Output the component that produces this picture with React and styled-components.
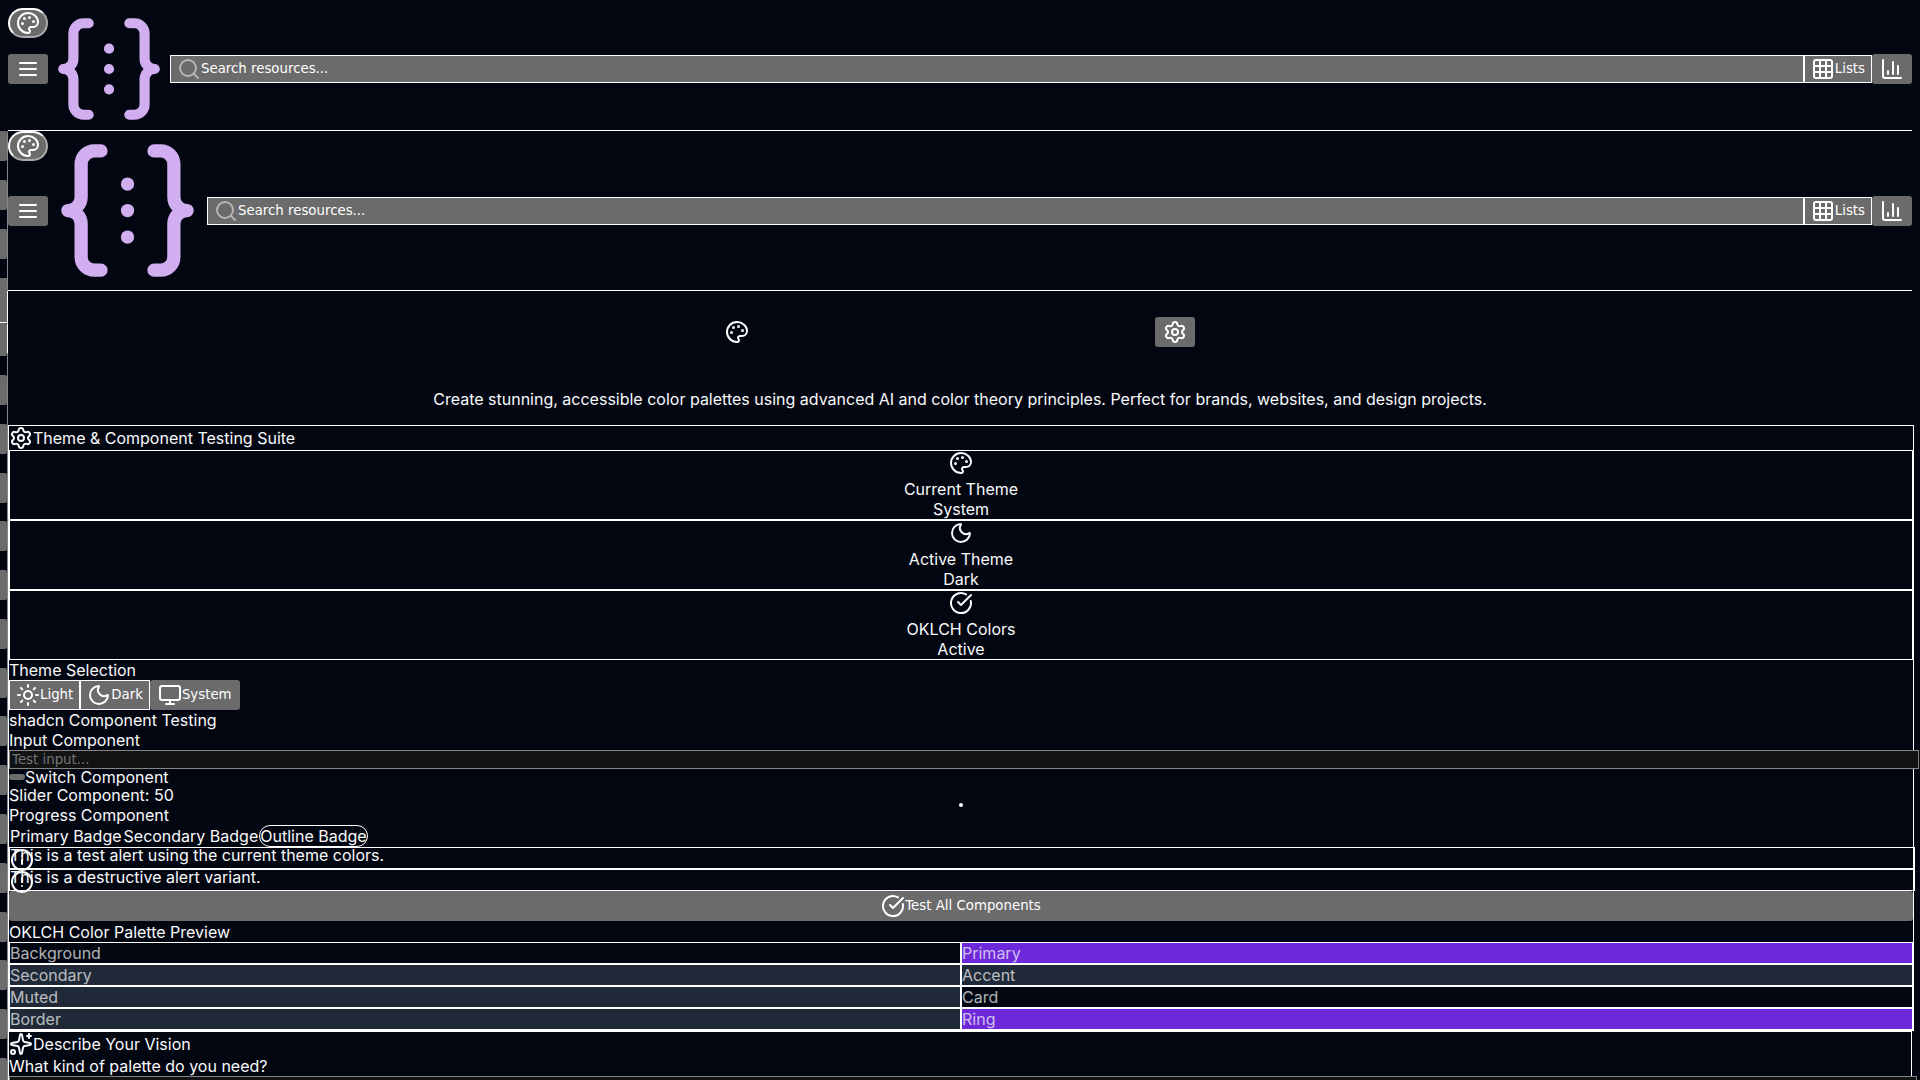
import React from "react";
import styled, { createGlobalStyle } from "styled-components";
import {
  Palette,
  Search,
  Grid3x3,
  ChartColumn,
  Settings,
  Moon,
  Sun,
  Monitor,
  CircleCheckBig,
  Info,
  CircleAlert,
  Sparkles,
} from "lucide-react";

const GlobalStyle = createGlobalStyle`
  html {
    color-scheme: dark;
    background: #020611;
  }
  body {
    margin: 0;
    color: #f9fafb;
    font-family: Inter, "Liberation Sans", sans-serif;
    font-size: 16px;
    line-height: 20px;
  }
  h2, h3, p {
    margin: 0;
    font-size: 16px;
    font-weight: 400;
  }
  svg {
    display: block;
    flex-shrink: 0;
  }
`;

const Page = styled.div`
  box-sizing: border-box;
  height: 100vh;
  padding: 8px;
  overflow: hidden;
`;

const Button = styled.button`
  display: inline-flex;
  align-items: center;
  justify-content: center;
  font-family: "DejaVu Sans", sans-serif;
  line-height: 16px;
  color: #ffffff;
`;

const OutlineButton = styled(Button)`
  border: 1px solid #ffffff;
  border-radius: 0;
  background: #6b6b6b;
`;

const SearchButton = styled(OutlineButton)`
  flex: 1;
  justify-content: flex-start;

  svg {
    opacity: 0.5;
  }
`;

const FloatingButton = styled(Button)`
  position: absolute;
  top: 0;
  left: 0;
  border: 2px outset #ffffff;
  border-radius: 9999px;
  background: #6b6b6b;
`;

const WideButton = styled(Button)`
  display: flex;
  width: 100%;
  margin-bottom: 1px;
`;

const Header = styled.header`
  position: relative;
  display: flex;
  align-items: center;
  border-bottom: 1px solid #ffffff;
`;

const Logo = styled.svg`
  width: ${(p) => p.$size}px;
  height: ${(p) => p.$size}px;
  color: #d0aef0;
`;

const Drawer = styled.aside`
  position: fixed;
  top: 131px;
  bottom: -8px;
  left: 0;
  display: flex;
  flex-direction: column;
  gap: 19px;
  box-sizing: border-box;
  width: 8px;
  border-right: 1px solid #85858c;

  &::after {
    content: "";
    position: absolute;
    top: 160px;
    left: 7px;
    width: 1px;
    height: 62px;
    background: #ffffff;
  }
`;

const DrawerGroup = styled.div`
  display: flex;
  flex-direction: column;
`;

const DrawerNav = styled.nav`
  display: flex;
  flex: 1;
  flex-direction: column;
  justify-content: space-between;
`;

const DrawerItem = styled.button`
  height: ${(p) => p.$height || 30}px;
  padding: 0;
  border: 0;
  border-bottom: ${(p) => (p.$divider ? "1px solid #ffffff" : "0")};
  border-radius: ${(p) => (p.$divider ? "0" : "0 2px 2px 0")};
  background: #6b6b6b;
`;

const HeroRow = styled.div`
  display: flex;
  align-items: center;
  justify-content: center;
  gap: 406px;
  padding: 26px 0;
`;

const HeroText = styled.p`
  margin: 16px 0;
  text-align: center;
`;

const Suite = styled.section`
  width: 100%;
  border: 1px solid #ffffff;
`;

const VisionCard = styled.section`
  border: 1px solid #ffffff;
`;

const CardHeader = styled.div`
  display: flex;
  align-items: center;
`;

const StatCard = styled.div`
  border: 1px solid #ffffff;
  text-align: center;

  svg {
    margin: 0 auto 4px;
  }
`;

const Row = styled.div`
  display: flex;
`;

const SwitchRow = styled.div`
  display: flex;
  align-items: center;
  height: 16px;
`;

const Switch = styled.button`
  width: 16px;
  height: 6px;
  padding: 0;
  border: 0;
  border-radius: 3px;
  background: #6b6b6b;
`;

const FieldLabel = styled.label`
  display: block;
`;

const TextField = styled.input`
  display: block;
  box-sizing: content-box;
  width: 100%;
  height: 15px;
  padding: 1px 2px;
  border: 1px solid #858585;
  background: #131313;
  font-family: "DejaVu Sans", sans-serif;

  &::placeholder {
    color: #757575;
  }
`;

const TextArea = styled.textarea`
  display: block;
  box-sizing: content-box;
  width: 100%;
  height: 60px;
  padding: 2px;
  border: 1px solid #858585;
  background: #131313;
  resize: none;
`;

const Slider = styled.input`
  display: block;
  width: 100%;
  height: 4px;
  margin: -2px 0;
  appearance: none;
  background: transparent;

  &::-webkit-slider-thumb {
    appearance: none;
    width: 4px;
    height: 4px;
    border-radius: 50%;
    background: #ffffff;
  }
`;

const Badge = styled.span`
  border: 1px solid ${(p) => (p.$outline ? "#ffffff" : "transparent")};
  border-radius: 9999px;
`;

const Alert = styled.div`
  position: relative;
  width: 100%;
  border: 1px solid #ffffff;

  svg {
    position: absolute;
    top: 0;
    left: 0;
  }

  p {
    transform: translateY(-3px);
  }
`;

const SwatchGrid = styled.div`
  display: grid;
  grid-template-columns: 1fr 1fr;
`;

const Swatch = styled.div`
  border: 1px solid #ffffff;
  background: ${(p) => p.$color};

  span {
    opacity: 0.7;
  }
`;

const DRAWER_ITEMS = [
  "Colors", "Fonts", "Icons", "Layouts", "Patterns", "Gradients", "Images", "Charts",
  "Tools", "Guides", "Tutorials", "Plugins", "Themes", "Templates", "Community",
];

const STATS = [
  { icon: Palette, label: "Current Theme", value: "System" },
  { icon: Moon, label: "Active Theme", value: "Dark" },
  { icon: CircleCheckBig, label: "OKLCH Colors", value: "Active" },
];

const SWATCHES = [
  ["Background", "#020611"],
  ["Primary", "#6d28d9"],
  ["Secondary", "#1f2937"],
  ["Accent", "#1f2937"],
  ["Muted", "#1f2937"],
  ["Card", "#020611"],
  ["Border", "#1f2937"],
  ["Ring", "#6d28d9"],
];

function MenuIcon() {
  return (
    <svg width="24" height="24" viewBox="0 0 24 24" fill="none" stroke="currentColor" strokeWidth="2" strokeLinecap="round">
      <path d="M4 6h16M4 12h16M4 18h16" />
    </svg>
  );
}

function TopBar({ logoSize }) {
  return (
    <Header>
      <FloatingButton aria-label="Choose palette"><Palette /></FloatingButton>
      <Button aria-label="Open menu"><MenuIcon /></Button>
      <Logo $size={logoSize} viewBox="0 0 24 24" fill="none" stroke="currentColor" strokeWidth="2" strokeLinecap="round" strokeLinejoin="round">
        <path d="M8 3H7a2 2 0 0 0-2 2v5a2 2 0 0 1-2 2 2 2 0 0 1 2 2v5a2 2 0 0 0 2 2h1" />
        <path d="M16 21h1a2 2 0 0 0 2-2v-5a2 2 0 0 1 2-2 2 2 0 0 1-2-2V5a2 2 0 0 0-2-2h-1" />
        <path d="M12 8h.01M12 12h.01M12 16h.01" />
      </Logo>
      <SearchButton><Search />Search resources...</SearchButton>
      <OutlineButton><Grid3x3 />Lists</OutlineButton>
      <Button aria-label="Statistics"><ChartColumn /></Button>
    </Header>
  );
}

export default function App() {
  return (
    <Page>
      <GlobalStyle />
      <TopBar logoSize={122} />
      <Drawer>
        <DrawerItem aria-label="Home" />
        <DrawerItem aria-label="Search" />
        <DrawerItem aria-label="Lists" />
        <DrawerGroup>
          <DrawerItem aria-label="Favorites" $height={45} $divider />
          <DrawerItem aria-label="All resources" $height={33} />
        </DrawerGroup>
        <DrawerNav>
          {DRAWER_ITEMS.map((name) => (
            <DrawerItem key={name} aria-label={name} />
          ))}
        </DrawerNav>
      </Drawer>
      <TopBar logoSize={159} />
      <main>
        <HeroRow>
          <Palette />
          <Button aria-label="Settings"><Settings /></Button>
        </HeroRow>
        <HeroText>
          Create stunning, accessible color palettes using advanced AI and color theory principles. Perfect for brands, websites, and design projects.
        </HeroText>
        <Suite>
          <CardHeader><Settings /><h2>Theme &amp; Component Testing Suite</h2></CardHeader>
          {STATS.map(({ icon: Icon, label, value }) => (
            <StatCard key={label}>
              <Icon />
              <p>{label}</p>
              <p>{value}</p>
            </StatCard>
          ))}
          <h3>Theme Selection</h3>
          <Row>
            <OutlineButton><Sun />Light</OutlineButton>
            <OutlineButton><Moon />Dark</OutlineButton>
            <Button><Monitor />System</Button>
          </Row>
          <h3>shadcn Component Testing</h3>
          <FieldLabel htmlFor="test-input">Input Component</FieldLabel>
          <TextField id="test-input" placeholder="Test input..." />
          <SwitchRow>
            <Switch id="test-switch" role="switch" aria-checked="false" />
            <FieldLabel htmlFor="test-switch">Switch Component</FieldLabel>
          </SwitchRow>
          <FieldLabel htmlFor="test-slider">Slider Component: 50</FieldLabel>
          <Slider id="test-slider" type="range" min="0" max="100" defaultValue="50" />
          <p>Progress Component</p>
          <Row>
            <Badge>Primary Badge</Badge>
            <Badge>Secondary Badge</Badge>
            <Badge $outline>Outline Badge</Badge>
          </Row>
          <Alert role="alert"><Info /><p>This is a test alert using the current theme colors.</p></Alert>
          <Alert role="alert"><CircleAlert /><p>This is a destructive alert variant.</p></Alert>
          <WideButton><CircleCheckBig />Test All Components</WideButton>
          <h3>OKLCH Color Palette Preview</h3>
          <SwatchGrid>
            {SWATCHES.map(([name, color]) => (
              <Swatch key={name} $color={color}><span>{name}</span></Swatch>
            ))}
          </SwatchGrid>
        </Suite>
        <VisionCard>
          <CardHeader><Sparkles /><h2>Describe Your Vision</h2></CardHeader>
          <FieldLabel htmlFor="vision">What kind of palette do you need?</FieldLabel>
          <TextArea id="vision" />
        </VisionCard>
      </main>
    </Page>
  );
}
